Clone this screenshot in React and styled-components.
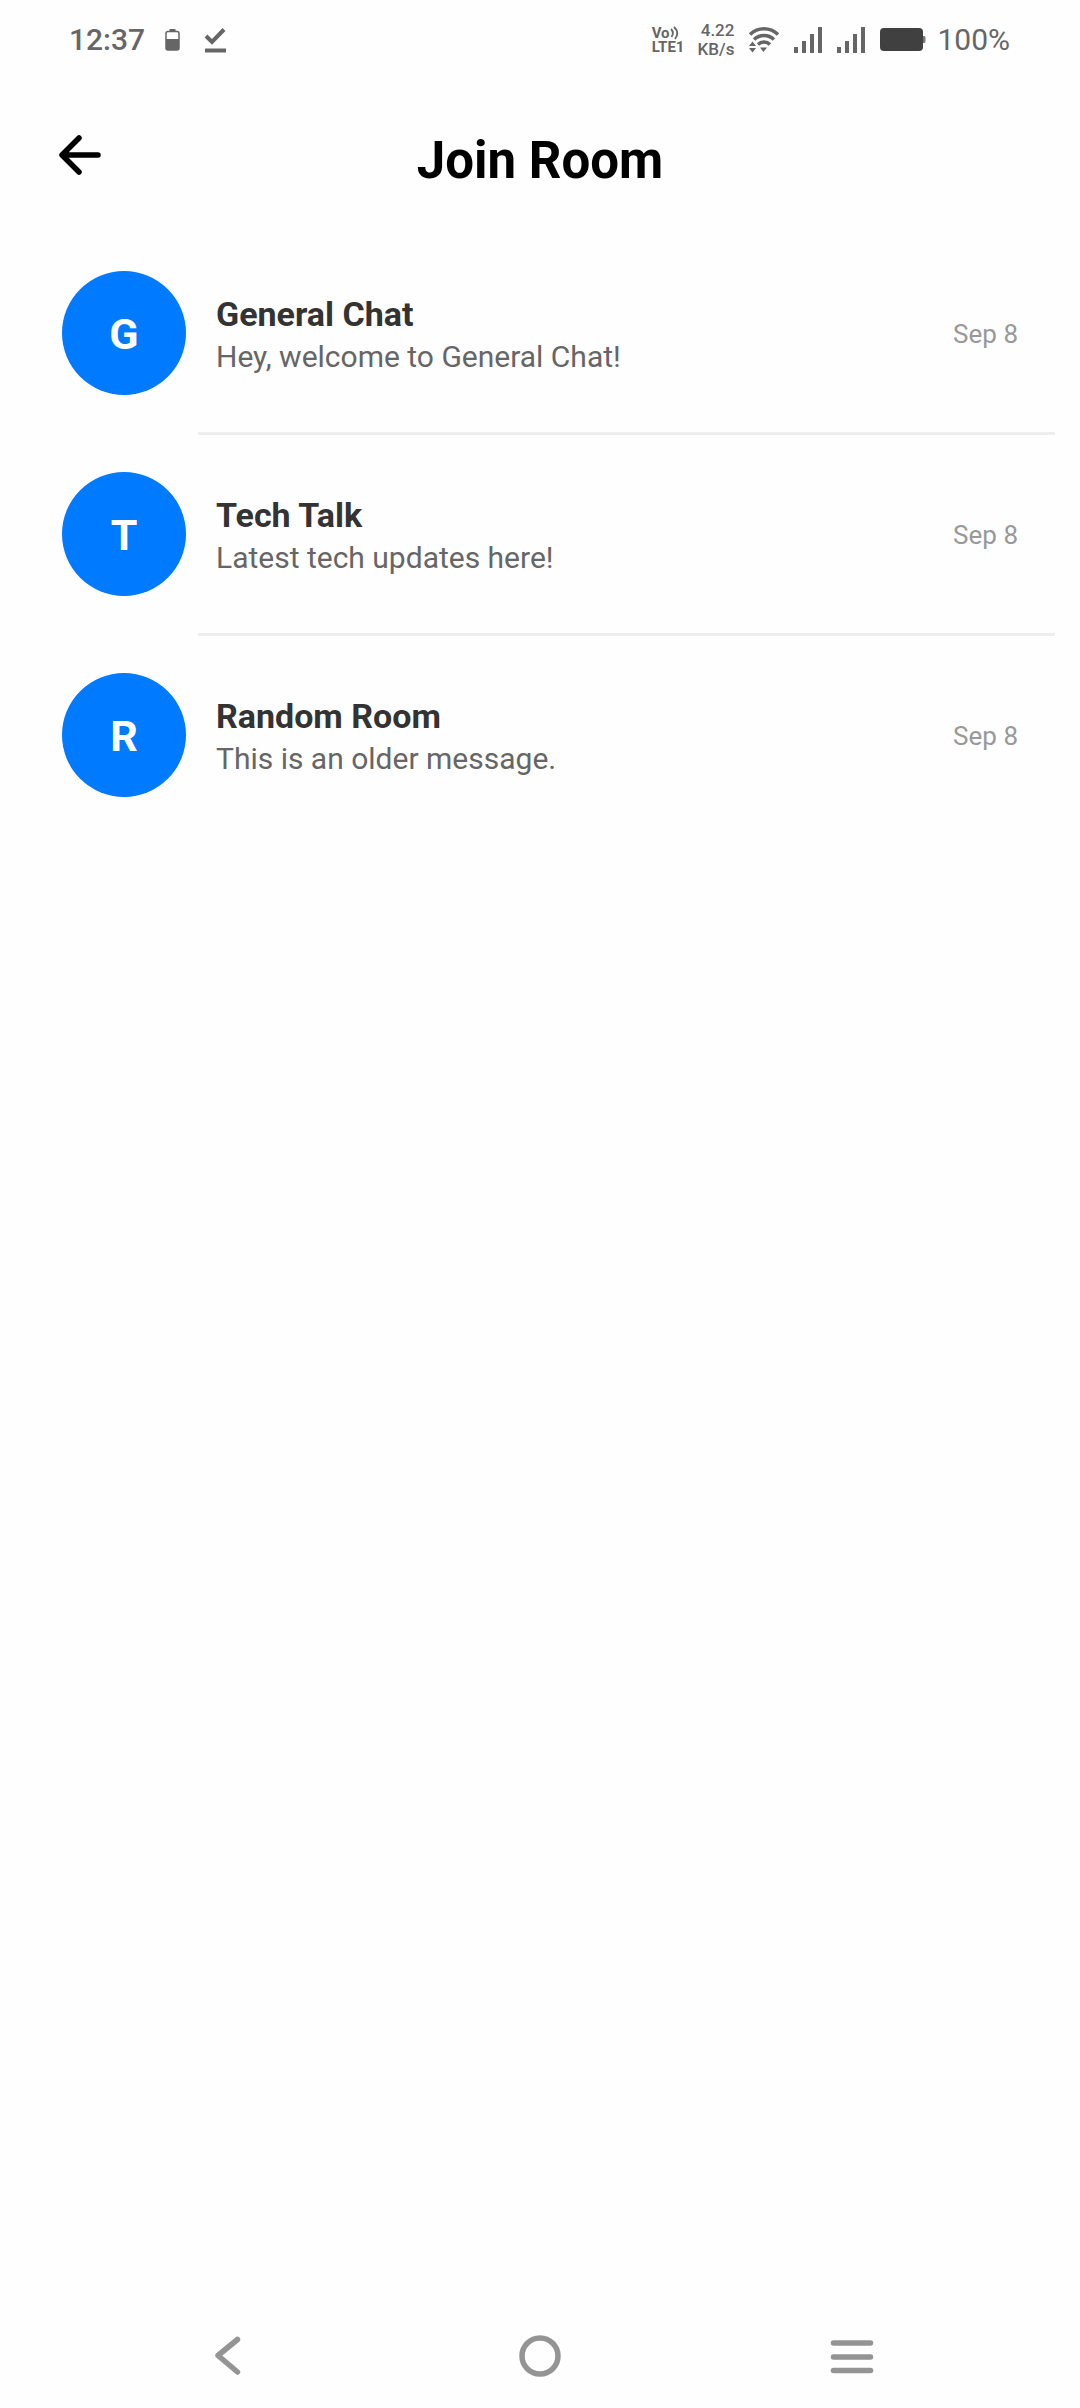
import React from "react";
import styled, { createGlobalStyle } from "styled-components";

const GlobalStyle = createGlobalStyle`
  *, *::before, *::after { box-sizing: border-box; }
  body {
    margin: 0;
    background: #fefefe;
    font-family: Roboto, "Noto Sans", sans-serif;
  }
  button {
    font: inherit;
    color: inherit;
    border: 0;
    padding: 0;
    background: none;
    cursor: pointer;
  }
`;

const Screen = styled.div`
  min-height: 100vh;
  display: flex;
  flex-direction: column;
`;

const StatusBar = styled.div`
  height: 80px;
  padding: 0 70px 0 69px;
  display: flex;
  align-items: center;
  justify-content: space-between;
  color: #666;
`;

const StatusGroup = styled.div`
  display: flex;
  align-items: center;
  gap: ${(p) => p.$gap}px;
`;

const StatusText = styled.span`
  font-size: 30px;
  line-height: 36px;
  font-weight: ${(p) => p.$weight || 400};
`;

const Icon = styled.svg`
  display: block;
  flex: none;
`;

const Volte = styled.div`
  display: flex;
  flex-direction: column;
  font-size: 15px;
  line-height: 14px;
  font-weight: 700;
`;

const VolteTop = styled.span`
  display: flex;
  align-items: center;
`;

const Speed = styled.div`
  width: 38px;
  text-align: right;
  font-size: 17px;
  line-height: 19px;
  font-weight: 500;
`;

const Header = styled.header`
  display: grid;
  grid-template-columns: 1fr auto 1fr;
  align-items: start;
  padding: 51px 56px 43px;
`;

const BackButton = styled.button`
  justify-self: start;
`;

const Title = styled.h1`
  margin: 0;
  font-size: 51px;
  line-height: 60px;
  font-weight: 700;
  color: #000;
`;

const RoomList = styled.ul`
  flex: 1;
  margin: 0;
  padding: 0 25px;
  list-style: none;
`;

const RoomItem = styled.li`
  & + &::before {
    content: "";
    display: block;
    height: 3px;
    margin-left: 173px;
    background: #eee;
  }
`;

const RoomButton = styled.button`
  width: 100%;
  padding: 37px;
  display: flex;
  align-items: center;
  gap: 30px;
  text-align: left;
`;

const Avatar = styled.span`
  flex: none;
  width: 124px;
  height: 124px;
  padding-top: 2px;
  border-radius: 50%;
  display: grid;
  place-items: center;
  background: #007aff;
  color: #fff;
  font-size: 43px;
  line-height: 50px;
  font-weight: 700;
`;

const RoomText = styled.span`
  flex: 1;
  min-width: 0;
  padding-top: 2px;
  display: flex;
  flex-direction: column;
  gap: 4px;
`;

const RoomName = styled.span`
  font-size: 34px;
  line-height: 42px;
  font-weight: 700;
  color: #333;
`;

const RoomMessage = styled.span`
  font-size: 30px;
  line-height: 36px;
  color: #666;
`;

const RoomDate = styled.span`
  padding-top: 2px;
  font-size: 26px;
  line-height: 30px;
  color: #999;
`;

const NavBar = styled.nav`
  height: 104px;
  padding: 0 180px;
  display: flex;
  align-items: center;
  justify-content: space-between;
  color: #949494;
`;

const NavButton = styled.button`
  width: 96px;
  height: 64px;
  display: grid;
  place-items: center;
`;

const rooms = [
  { name: "General Chat", message: "Hey, welcome to General Chat!", date: "Sep 8" },
  { name: "Tech Talk", message: "Latest tech updates here!", date: "Sep 8" },
  { name: "Random Room", message: "This is an older message.", date: "Sep 8" },
];

const Signal = () => (
  <Icon width="28" height="26" viewBox="0 0 28 26" fill="currentColor" aria-hidden="true">
    <rect x="0" y="20" width="4" height="6" />
    <rect x="8" y="14" width="4" height="12" />
    <rect x="16" y="7" width="4" height="19" />
    <rect x="24" y="0" width="4" height="26" />
  </Icon>
);

const Wifi = () => (
  <Icon width="30" height="26" viewBox="0 0 30 26" fill="none" stroke="currentColor" strokeWidth="3.400" aria-hidden="true">
    <path d="M1 7.500A20 20 0 0 1 29 7.500" />
    <path d="M5 12.500A14.500 14.500 0 0 1 25 12.500" />
    <path d="M9 17.500A8.500 8.500 0 0 1 21 17.500" />
    <path d="M0 19L3.500 14.500L7 19ZM0 21L3.500 25.500L7 21ZM11 20.500H18L14.500 25Z" fill="currentColor" stroke="none" />
  </Icon>
);

export default function App() {
  return (
    <Screen>
      <GlobalStyle />
      <StatusBar>
        <StatusGroup $gap={20}>
          <StatusText $weight={500}>12:37</StatusText>
          <Icon width="15" height="22" viewBox="0 0 15 22" fill="currentColor" aria-hidden="true">
            <rect x="1" y="2.500" width="13" height="18.500" rx="2" fill="none" stroke="currentColor" strokeWidth="1.500" />
            <path d="M4.500 0H10.500V2.500H4.500ZM1 10H14V21H1Z" />
          </Icon>
          <Icon width="30" height="26" viewBox="0 0 30 26" fill="none" stroke="currentColor" strokeWidth="4" aria-hidden="true">
            <path d="M6 9L12 15L24 2.500M5 23.500H26" />
          </Icon>
        </StatusGroup>
        <StatusGroup $gap={15}>
          <StatusGroup $gap={12}>
            <Volte>
              <VolteTop>
                Vo
                <Icon width="10" height="14" viewBox="0 0 10 14" fill="none" stroke="currentColor" strokeWidth="1.800" aria-hidden="true">
                  <path d="M1 3Q4.500 6.500 1.500 11M4 1Q10 6.500 5 13" />
                </Icon>
              </VolteTop>
              <span>LTE1</span>
            </Volte>
            <Speed>4.22 KB/s</Speed>
          </StatusGroup>
          <Wifi />
          <Signal />
          <Signal />
          <StatusGroup $gap={11}>
            <Icon width="46" height="24" viewBox="0 0 46 24" fill="#404040" aria-hidden="true">
              <rect x="0" y="0" width="43" height="23" rx="4" />
              <path d="M43 8H44Q45.500 8 45.500 10V13Q45.500 15 44 15H43Z" fill="#777" />
            </Icon>
            <StatusText>100%</StatusText>
          </StatusGroup>
        </StatusGroup>
      </StatusBar>

      <Header>
        <BackButton type="button" aria-label="Back">
          <Icon width="48" height="48" viewBox="0 0 48 48" fill="none" stroke="#000" strokeWidth="5.500" strokeLinecap="round" strokeLinejoin="round">
            <path d="M23 7L6 24L23 41M7 24H42" />
          </Icon>
        </BackButton>
        <Title>Join Room</Title>
      </Header>

      <RoomList>
        {rooms.map((room) => (
          <RoomItem key={room.name}>
            <RoomButton type="button">
              <Avatar>{room.name[0]}</Avatar>
              <RoomText>
                <RoomName>{room.name}</RoomName>
                <RoomMessage>{room.message}</RoomMessage>
              </RoomText>
              <RoomDate>{room.date}</RoomDate>
            </RoomButton>
          </RoomItem>
        ))}
      </RoomList>

      <NavBar aria-label="System">
        <NavButton type="button" aria-label="Back">
          <Icon width="48" height="48" viewBox="0 0 48 48" fill="none" stroke="currentColor" strokeWidth="5.500" strokeLinecap="round" strokeLinejoin="round">
            <path d="M33.500 7.500L14 23.500L33.500 40" />
          </Icon>
        </NavButton>
        <NavButton type="button" aria-label="Home">
          <Icon width="48" height="48" viewBox="0 0 48 48" fill="none" stroke="currentColor" strokeWidth="5.500">
            <circle cx="24" cy="24" r="18" />
          </Icon>
        </NavButton>
        <NavButton type="button" aria-label="Recent apps">
          <Icon width="48" height="48" viewBox="0 0 48 48" fill="none" stroke="currentColor" strokeWidth="5.500" strokeLinecap="round">
            <path d="M5.500 11H42.500M5.500 25H42.500M5.500 38.500H42.500" />
          </Icon>
        </NavButton>
      </NavBar>
    </Screen>
  );
}
